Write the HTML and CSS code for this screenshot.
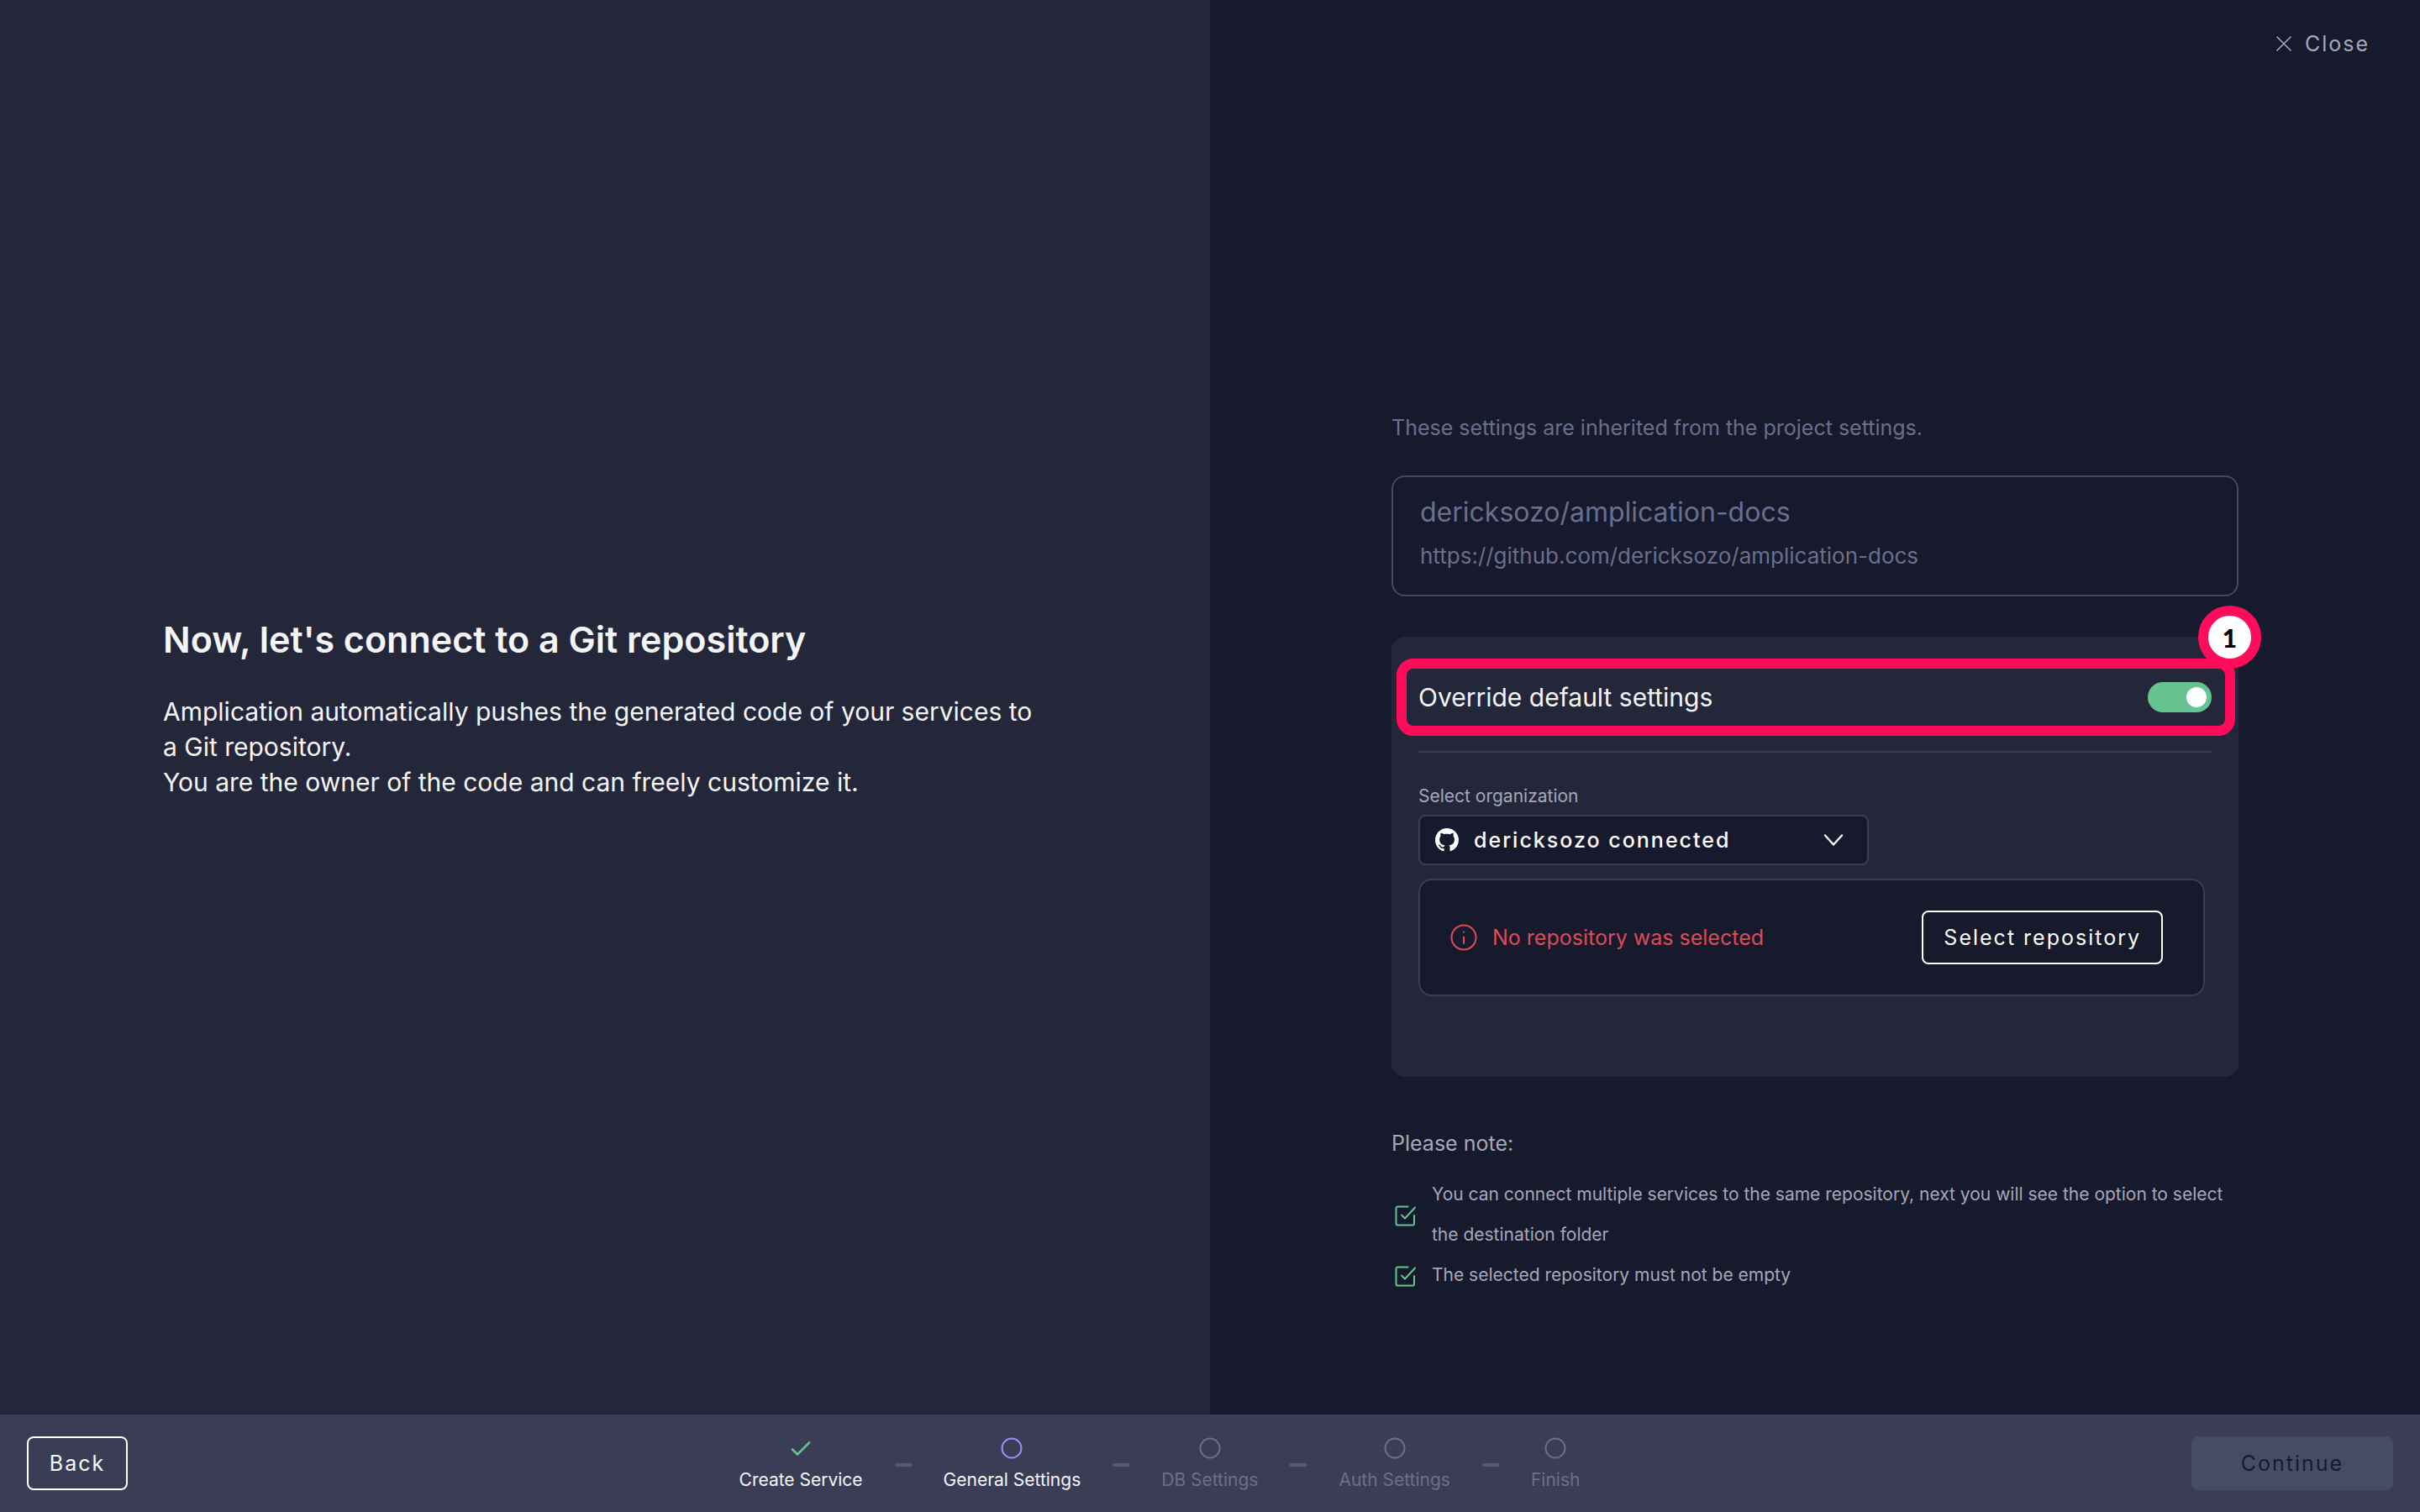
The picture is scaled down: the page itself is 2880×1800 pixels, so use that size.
FILE: index.html
```html
<!DOCTYPE html>
<html lang="en">
<head>
  <meta charset="utf-8">
  <meta name="viewport" content="width=device-width, initial-scale=1">
  <title>Connect to a Git repository</title>
  <link rel="stylesheet" href="styles.css">
</head>
<body>
  <div class="wizard">
    <main class="panels">
      <section class="intro">
        <h1 class="intro-title">Now, let's connect to a Git repository</h1>
        <p class="intro-text">Amplication automatically pushes the generated code of your services to a Git repository.<br>You are the owner of the code and can freely customize it.</p>
      </section>

      <section class="setup">
        <header class="setup-header">
          <button class="close" type="button">
            <svg width="18" height="18" viewBox="0 0 18 18" fill="none" stroke="currentColor" stroke-width="1.6" stroke-linecap="round" aria-hidden="true"><path d="M1 1l16 16M17 1L1 17"/></svg>
            Close
          </button>
        </header>

        <div class="setup-body">
          <p class="inherited">These settings are inherited from the project settings.</p>

          <div class="repo">
            <h2 class="repo-name">dericksozo/amplication-docs</h2>
            <a class="repo-link" href="https://github.com/dericksozo/amplication-docs">https://github.com/dericksozo/amplication-docs</a>
          </div>

          <div class="card">
            <div class="override">
              <label for="override">Override default settings</label>
              <input class="toggle" id="override" type="checkbox" checked>
              <div class="marker"><span class="marker-number">1</span></div>
            </div>
            <hr class="divider">

            <label class="org-label" for="organization">Select organization</label>
            <div class="org">
              <svg class="org-logo" width="28" height="28" viewBox="0 0 16 16" fill="currentColor" aria-hidden="true"><path d="M8 0C3.58 0 0 3.58 0 8c0 3.54 2.29 6.53 5.47 7.59.4.07.55-.17.55-.38 0-.19-.01-.82-.01-1.49-2.01.37-2.53-.49-2.69-.94-.09-.23-.48-.94-.82-1.13-.28-.15-.68-.52-.01-.53.63-.01 1.08.58 1.23.82.72 1.21 1.87.87 2.33.66.07-.52.28-.87.51-1.07-1.78-.2-3.64-.89-3.64-3.95 0-.87.31-1.59.82-2.15-.08-.2-.36-1.02.08-2.12 0 0 .67-.21 2.2.82.64-.18 1.32-.27 2-.27s1.36.09 2 .27c1.53-1.04 2.2-.82 2.2-.82.44 1.1.16 1.92.08 2.12.51.56.82 1.27.82 2.15 0 3.07-1.87 3.75-3.65 3.95.29.25.54.73.54 1.48 0 1.07-.01 1.93-.01 2.2 0 .21.15.46.55.38A8.01 8.01 0 0 0 16 8c0-4.42-3.58-8-8-8z"/></svg>
              <select class="org-select" id="organization">
                <option>dericksozo connected</option>
              </select>
              <svg class="org-chevron" width="24" height="16" viewBox="0 0 24 16" fill="none" stroke="currentColor" stroke-width="2.4" stroke-linecap="round" stroke-linejoin="round" aria-hidden="true"><path d="M2 2.5l10 11 10-11"/></svg>
            </div>

            <div class="selection">
              <svg width="32" height="32" viewBox="0 0 32 32" fill="none" stroke="currentColor" stroke-width="2" stroke-linecap="round" aria-hidden="true"><circle cx="16" cy="16" r="14.5"/><path d="M16 15.5v7.5"/><path d="M16 9.4v.4"/></svg>
              <p class="selection-text">No repository was selected</p>
              <button class="button" type="button">Select repository</button>
            </div>
          </div>

          <h3 class="notes-title">Please note:</h3>
          <ul class="notes">
            <li class="note">
              <svg width="32" height="28" viewBox="0 0 32 28" fill="none" stroke="currentColor" stroke-width="2" stroke-linecap="round" stroke-linejoin="round" aria-hidden="true"><path d="M19.5 4.5H7.5a2 2 0 0 0-2 2V24.5a2 2 0 0 0 2 2H25a2 2 0 0 0 2-2V15"/><path d="M12 14.5l4 4 12-13"/></svg>
              <span>You can connect multiple services to the same repository, next you will see the option to select the destination folder</span>
            </li>
            <li class="note">
              <svg width="32" height="28" viewBox="0 0 32 28" fill="none" stroke="currentColor" stroke-width="2" stroke-linecap="round" stroke-linejoin="round" aria-hidden="true"><path d="M19.5 4.5H7.5a2 2 0 0 0-2 2V24.5a2 2 0 0 0 2 2H25a2 2 0 0 0 2-2V15"/><path d="M12 14.5l4 4 12-13"/></svg>
              <span>The selected repository must not be empty</span>
            </li>
          </ul>
        </div>
      </section>
    </main>

    <footer class="footer">
      <button class="button" type="button">Back</button>
      <ol class="steps">
        <li class="step step-done">
          <svg class="step-icon" width="28" height="28" viewBox="0 0 28 28" fill="none" stroke="currentColor" stroke-width="2.6" stroke-linecap="round" aria-hidden="true"><path d="M4 15.5l6 6L24 7.5"/></svg>
          Create Service
        </li>
        <li class="step step-current">
          <svg class="step-icon" width="28" height="28" viewBox="0 0 28 28" fill="none" stroke="currentColor" stroke-width="2" aria-hidden="true"><circle cx="14" cy="14" r="11.5"/></svg>
          General Settings
        </li>
        <li class="step">
          <svg class="step-icon" width="28" height="28" viewBox="0 0 28 28" fill="none" stroke="currentColor" stroke-width="2" aria-hidden="true"><circle cx="14" cy="14" r="11.5"/></svg>
          DB Settings
        </li>
        <li class="step">
          <svg class="step-icon" width="28" height="28" viewBox="0 0 28 28" fill="none" stroke="currentColor" stroke-width="2" aria-hidden="true"><circle cx="14" cy="14" r="11.5"/></svg>
          Auth Settings
        </li>
        <li class="step">
          <svg class="step-icon" width="28" height="28" viewBox="0 0 28 28" fill="none" stroke="currentColor" stroke-width="2" aria-hidden="true"><circle cx="14" cy="14" r="11.5"/></svg>
          Finish
        </li>
      </ol>
      <button class="button continue" type="button" disabled>Continue</button>
    </footer>
  </div>
</body>
</html>
```
FILE: styles.css
```css
:root {
  --base: #171a2c;
  --surface: #242739;
  --bar: #3a3d55;
  --line: #444963;
  --raised: #474c66;
  --dash: #545873;
  --muted: #6b6f8d;
  --soft: #a5a8ba;
  --text: #f5f6fa;
  --green: #65c38f;
  --purple: #a787ff;
  --red: #dc4b57;
  --pink: #ff0d5a;
}

* {
  box-sizing: border-box;
}

body {
  margin: 0;
  background: var(--base);
  color: var(--text);
  font-family: "Inter", sans-serif;
  font-size: 25px;
  line-height: 38px;
}

h1, h2, h3, p, ul, ol {
  margin: 0;
  padding: 0;
  font-weight: 400;
  list-style: none;
}

button, select {
  font: inherit;
  color: inherit;
}

svg {
  flex: none;
}

.wizard {
  display: flex;
  flex-direction: column;
  min-height: 100vh;
}

.panels {
  flex: 1;
  display: grid;
  grid-template-columns: 1fr 1fr;
}

.intro {
  display: flex;
  flex-direction: column;
  justify-content: center;
  gap: 36px;
  padding: 0 194px;
  background: var(--surface);
}

.intro-title {
  font-size: 43px;
  line-height: 58px;
  font-weight: 600;
}

.intro-text {
  font-size: 30px;
  line-height: 42px;
}

.setup-header {
  display: flex;
  align-items: center;
  justify-content: flex-end;
  height: 104px;
  padding: 0 60px;
}

.close {
  display: flex;
  align-items: center;
  gap: 16px;
  padding: 0;
  border: 0;
  background: none;
  color: var(--soft);
  letter-spacing: 2px;
}

.setup-body {
  padding: 386px 216px 60px;
}

.inherited {
  color: var(--muted);
}

.repo {
  display: flex;
  flex-direction: column;
  gap: 8px;
  margin-top: 38px;
  padding: 18px 32px 26px;
  border: 2px solid var(--line);
  border-radius: 16px;
  color: var(--muted);
}

.repo-name {
  font-size: 32px;
  line-height: 48px;
}

.repo-link {
  color: inherit;
  font-size: 26px;
  line-height: 40px;
  text-decoration: none;
}

.card {
  margin-top: 48px;
  padding: 26px 32px 96px;
  border-radius: 16px;
  background: var(--surface);
}

.override {
  position: relative;
  display: flex;
  align-items: center;
  justify-content: space-between;
  height: 92px;
  font-size: 30px;
}

.toggle {
  appearance: none;
  width: 76px;
  height: 36px;
  margin: 0;
  padding: 6px;
  border-radius: 18px;
  background: var(--bar);
}

.toggle::before {
  content: "";
  display: block;
  width: 24px;
  height: 24px;
  border-radius: 50%;
  background: #fff;
}

.toggle:checked {
  background: var(--green);
}

.toggle:checked::before {
  margin-left: auto;
}

/* Tutorial callout drawn over the override row */
.marker {
  position: absolute;
  inset: 0 -28px 0 -26px;
  border: 12px solid var(--pink);
  border-radius: 20px;
  pointer-events: none;
}

.marker-number {
  position: absolute;
  top: -75px;
  right: -43px;
  display: grid;
  place-items: center;
  width: 75px;
  height: 75px;
  border: 12px solid var(--pink);
  border-radius: 50%;
  background: #fff;
  color: #000;
  font-family: "Lato", sans-serif;
  font-weight: 900;
}

.divider {
  height: 2px;
  margin: 18px 0 36px;
  border: 0;
  background: var(--bar);
}

.org-label {
  display: block;
  margin-bottom: 6px;
  color: var(--soft);
  font-size: 21px;
  line-height: 32px;
}

.org {
  position: relative;
  width: 536px;
  max-width: 100%;
}

.org-select {
  appearance: none;
  display: block;
  width: 100%;
  height: 60px;
  padding: 0 64px;
  border: 2px solid var(--bar);
  border-radius: 8px;
  background: var(--base);
  color: #fff;
  font-weight: 500;
  letter-spacing: 2px;
}

.org-logo,
.org-chevron {
  position: absolute;
  top: 50%;
  translate: 0 -50%;
  color: #fff;
  pointer-events: none;
}

.org-logo {
  left: 20px;
}

.org-chevron {
  right: 30px;
}

.selection {
  display: flex;
  align-items: center;
  margin: 16px 8px 0 0;
  padding: 36px 48px 36px 36px;
  border: 2px solid var(--bar);
  border-radius: 16px;
  background: var(--base);
  color: var(--red);
}

.selection-text {
  flex: 1;
  padding-left: 18px;
}

.button {
  height: 64px;
  padding: 0 24px;
  border: 2px solid #fff;
  border-radius: 8px;
  background: none;
  color: #fff;
  letter-spacing: 2px;
}

.notes-title {
  margin-top: 60px;
  color: var(--soft);
  font-size: 25px;
}

.notes {
  margin-top: 18px;
  color: var(--soft);
  font-size: 21px;
  line-height: 48px;
}

.note {
  display: flex;
  align-items: center;
  gap: 16px;
}

.note svg {
  color: var(--green);
}

.footer {
  display: flex;
  align-items: center;
  justify-content: space-between;
  height: 116px;
  padding: 0 32px;
  background: var(--bar);
}

.footer .button {
  min-width: 120px;
}

.footer .continue {
  width: 240px;
  border: 0;
  background: var(--raised);
  color: var(--base);
}

.steps {
  display: flex;
  align-items: center;
  padding-top: 4px;
  font-size: 21px;
  line-height: 32px;
}

.step {
  display: flex;
  flex-direction: column;
  align-items: center;
  gap: 8px;
  color: var(--muted);
}

/* The dash that joins a step to the one before it */
.step + .step {
  position: relative;
  margin-left: 96px;
}

.step + .step::before {
  content: "";
  position: absolute;
  top: 32px;
  right: calc(100% + 38px);
  width: 20px;
  height: 4px;
  background: var(--dash);
}

.step-done,
.step-current {
  color: var(--text);
}

.step-done .step-icon {
  color: var(--green);
}

.step-current .step-icon {
  color: var(--purple);
}
```
